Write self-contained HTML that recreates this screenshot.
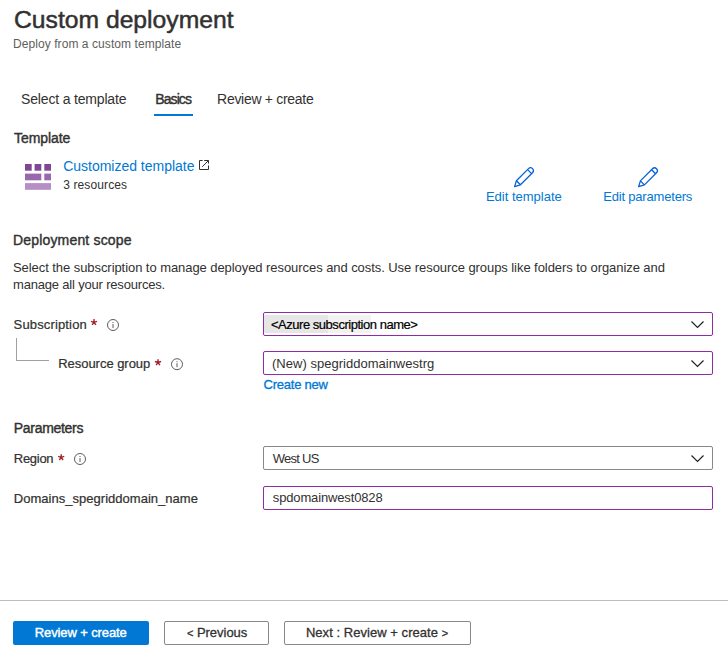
<!DOCTYPE html>
<html><head><meta charset="utf-8"><style>
html,body{margin:0;padding:0;background:#fff;width:728px;height:662px;overflow:hidden;position:relative;font-family:"Liberation Sans",sans-serif;}
.t{position:absolute;white-space:pre;}
.a{position:absolute;}
.box{position:absolute;box-sizing:border-box;border:1px solid #8a8886;border-radius:2px;background:#fff;}
.pur{border-color:#8e2ca3;}
.star{position:absolute;color:#a4262c;font-size:15px;line-height:15px;font-weight:400;}
svg{position:absolute;overflow:visible;}
</style></head><body>
<!-- tab underline -->
<div class="a" style="left:154px;top:114px;width:39px;height:2px;background:#0078d4"></div>
<!-- template icon -->
<svg style="left:0;top:0" width="728" height="662">
 <g fill="#804795">
  <rect x="25" y="164" width="6.7" height="6.7"/>
  <rect x="34.6" y="164" width="6.7" height="6.7"/>
  <rect x="44.3" y="164" width="6.7" height="6.7"/>
 </g>
 <g fill="#9868ae">
  <rect x="25" y="173.6" width="16.3" height="6.7"/>
  <rect x="44.3" y="173.6" width="6.7" height="6.7"/>
 </g>
 <rect x="25" y="183.1" width="26" height="6.7" fill="#b48ec4"/>
</svg>
<!-- boxes -->
<div class="box pur" style="left:263px;top:312px;width:450px;height:24px"></div>
<div class="a" style="left:264px;top:315px;width:64px;height:18px;background:#e6e6e6"></div>
<div class="a" style="left:328px;top:315px;width:43px;height:18px;background:#f2f2f2"></div>
<div class="box pur" style="left:263px;top:351px;width:450px;height:24px"></div>
<div class="box" style="left:263px;top:446px;width:450px;height:24px"></div>
<div class="box pur" style="left:263px;top:486px;width:450px;height:24px"></div>
<!-- separator -->
<div class="a" style="left:0;top:600px;width:728px;height:1px;background:#bdbdbd"></div>
<!-- buttons -->
<div class="a" style="left:13px;top:621px;width:136px;height:24px;background:#0078d4;border-radius:2px"></div>
<div class="box" style="left:164px;top:621px;width:105px;height:24px"></div>
<div class="box" style="left:284px;top:621px;width:187px;height:24px"></div>
<!-- tree lines -->
<div class="a" style="left:16px;top:338px;width:1px;height:23px;background:#a0a0a0"></div>
<div class="a" style="left:16px;top:360px;width:33px;height:1px;background:#a0a0a0"></div>
<!-- icons -->
<svg style="left:0;top:0" width="728" height="662" fill="none">
 <!-- external link -->
 <path d="M202.6,160.5 H199.5 V169.5 H208.5 V165.4 M204.2,160.5 H208.5 V163.6 M202.2,166.8 L208.5,160.5" stroke="#323130" stroke-width="1"/>
 <!-- pencils -->
 <g transform="translate(514.6,186.6) rotate(-45)" stroke="#0560d8" stroke-width="1.25" stroke-linejoin="round">
  <path d="M0,0 L5.4,-2.85 L22.5,-2.85 A2.85,2.85 0 0 1 22.5,2.85 L5.4,2.85 Z M5.4,-2.85 V2.85 M21.2,-2.85 V2.85"/>
 </g>
 <g transform="translate(638.6,186.7) rotate(-45)" stroke="#0560d8" stroke-width="1.25" stroke-linejoin="round">
  <path d="M0,0 L5.4,-2.85 L22.5,-2.85 A2.85,2.85 0 0 1 22.5,2.85 L5.4,2.85 Z M5.4,-2.85 V2.85 M21.2,-2.85 V2.85"/>
 </g>
 <!-- chevrons -->
 <path d="M691.5,321.5 L697.5,327.5 L703.5,321.5" stroke="#201f1e" stroke-width="1.15"/>
 <path d="M691.5,360.5 L697.5,366.5 L703.5,360.5" stroke="#201f1e" stroke-width="1.15"/>
 <path d="M691.5,455.5 L697.5,461.5 L703.5,455.5" stroke="#201f1e" stroke-width="1.15"/>
 <!-- info icons -->
 <g stroke="#605e5c" stroke-width="1">
  <circle cx="113" cy="325" r="5.5"/>
  <circle cx="177" cy="364.2" r="5.5"/>
  <circle cx="80" cy="459" r="5.5"/>
 </g>
 <g fill="#605e5c">
  <rect x="112.5" y="322" width="1" height="1"/><rect x="112.5" y="324" width="1" height="4"/>
  <rect x="176.5" y="361.2" width="1" height="1"/><rect x="176.5" y="363.2" width="1" height="4"/>
  <rect x="79.5" y="456" width="1" height="1"/><rect x="79.5" y="458" width="1" height="4"/>
 </g>
 <!-- asterisks -->
 <g stroke="#a4262c" stroke-width="1.4" stroke-linecap="butt">
  <g transform="translate(94,322.3)"><path id="ast" d="M0,0 V-3.2 M0,0 L3.05,-0.99 M0,0 L1.88,2.6 M0,0 L-1.88,2.6 M0,0 L-3.05,-0.99"/></g>
  <g transform="translate(158,362.5)"><use href="#ast"/></g>
  <g transform="translate(61.2,457.4)"><use href="#ast"/></g>
 </g>
</svg>
<div class="t" id="title" style="left:14.00px;top:4.00px;font-size:24.7px;line-height:31px;font-weight:400;color:#323130;letter-spacing:-0.001px;-webkit-text-stroke:0.5px #323130">Custom deployment</div>
<div class="t" id="sub" style="left:13.00px;top:37.00px;font-size:12px;line-height:15px;font-weight:400;color:#605e5c;letter-spacing:0.071px">Deploy from a custom template</div>
<div class="t" id="tab1" style="left:21.10px;top:90.00px;font-size:14px;line-height:18px;font-weight:400;color:#323130;letter-spacing:-0.175px">Select a template</div>
<div class="t" id="tab2" style="left:155.30px;top:90.00px;font-size:14px;line-height:18px;font-weight:400;color:#323130;letter-spacing:-0.920px;-webkit-text-stroke:0.4px #323130">Basics</div>
<div class="t" id="tab3" style="left:217.10px;top:90.00px;font-size:14px;line-height:18px;font-weight:400;color:#323130;letter-spacing:-0.300px">Review + create</div>
<div class="t" id="h_tpl" style="left:14.00px;top:129.00px;font-size:14px;line-height:18px;font-weight:400;color:#323130;letter-spacing:-0.071px;-webkit-text-stroke:0.4px #323130">Template</div>
<div class="t" id="link" style="left:63.20px;top:157.00px;font-size:14px;line-height:18px;font-weight:400;color:#0078d4;letter-spacing:-0.011px">Customized template</div>
<div class="t" id="res" style="left:63.20px;top:178.00px;font-size:12px;line-height:15px;font-weight:400;color:#323130;letter-spacing:0.120px">3 resources</div>
<div class="t" id="edit1" style="left:485.90px;top:189.00px;font-size:13px;line-height:16px;font-weight:400;color:#0078d4;letter-spacing:-0.000px">Edit template</div>
<div class="t" id="edit2" style="left:603.20px;top:189.00px;font-size:13px;line-height:16px;font-weight:400;color:#0078d4;letter-spacing:-0.186px">Edit parameters</div>
<div class="t" id="h_scope" style="left:13.00px;top:231.00px;font-size:14px;line-height:18px;font-weight:400;color:#323130;letter-spacing:0.173px;-webkit-text-stroke:0.4px #323130">Deployment scope</div>
<div class="t" id="desc1" style="left:13.00px;top:260.00px;font-size:13px;line-height:16px;font-weight:400;color:#323130;letter-spacing:-0.064px">Select the subscription to manage deployed resources and costs. Use resource groups like folders to organize and</div>
<div class="t" id="desc2" style="left:13.00px;top:277.00px;font-size:13px;line-height:16px;font-weight:400;color:#323130;letter-spacing:-0.184px">manage all your resources.</div>
<div class="t" id="l_sub" style="left:13.60px;top:317.00px;font-size:13px;line-height:16px;font-weight:400;color:#323130;letter-spacing:0.146px;-webkit-text-stroke:0.22px #323130">Subscription</div>
<div class="t" id="l_rg" style="left:58.20px;top:356.00px;font-size:13px;line-height:16px;font-weight:400;color:#323130;letter-spacing:-0.030px;-webkit-text-stroke:0.22px #323130">Resource group</div>
<div class="t" id="v_sub" style="left:270.90px;top:317.00px;font-size:13px;line-height:16px;font-weight:400;color:#000000;letter-spacing:-0.467px;-webkit-text-stroke:0.2px #000000">&lt;Azure subscription name&gt;</div>
<div class="t" id="v_rg" style="left:272.00px;top:356.00px;font-size:13px;line-height:16px;font-weight:400;color:#323130;letter-spacing:0.017px">(New) spegriddomainwestrg</div>
<div class="t" id="create" style="left:263.60px;top:377.00px;font-size:13px;line-height:16px;font-weight:400;color:#0078d4;letter-spacing:-0.244px;-webkit-text-stroke:0.3px #0078d4">Create new</div>
<div class="t" id="h_par" style="left:13.80px;top:419.00px;font-size:14px;line-height:18px;font-weight:400;color:#323130;letter-spacing:-0.300px;-webkit-text-stroke:0.4px #323130">Parameters</div>
<div class="t" id="l_reg" style="left:13.80px;top:451.00px;font-size:13px;line-height:16px;font-weight:400;color:#323130;letter-spacing:-0.280px;-webkit-text-stroke:0.22px #323130">Region</div>
<div class="t" id="v_reg" style="left:272.80px;top:451.00px;font-size:13px;line-height:16px;font-weight:400;color:#323130;letter-spacing:-0.733px">West US</div>
<div class="t" id="l_dom" style="left:13.80px;top:491.00px;font-size:13px;line-height:16px;font-weight:400;color:#323130;letter-spacing:0.024px;-webkit-text-stroke:0.22px #323130">Domains_spegriddomain_name</div>
<div class="t" id="v_dom" style="left:272.80px;top:490.00px;font-size:13px;line-height:16px;font-weight:400;color:#323130;letter-spacing:-0.146px">spdomainwest0828</div>
<div class="t" id="b1" style="left:34.80px;top:625.00px;font-size:13px;line-height:16px;font-weight:400;color:#ffffff;letter-spacing:-0.115px;-webkit-text-stroke:0.4px #ffffff">Review + create</div>
<div class="t" id="b2" style="left:186.90px;top:625.00px;font-size:13px;line-height:16px;font-weight:400;color:#323130;letter-spacing:-0.023px;-webkit-text-stroke:0.3px #323130"><span style="font-size:11px">&lt;</span> Previous</div>
<div class="t" id="b3" style="left:305.90px;top:625.00px;font-size:13px;line-height:16px;font-weight:400;color:#323130;letter-spacing:0.043px;-webkit-text-stroke:0.3px #323130">Next : Review + create <span style="font-size:11px">&gt;</span></div>
</body></html>
